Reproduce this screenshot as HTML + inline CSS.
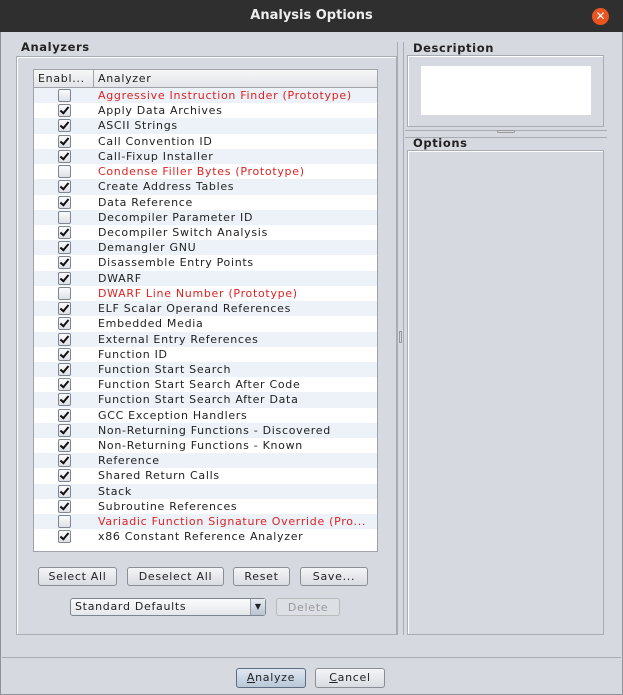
<!DOCTYPE html><html><head><style>
body{margin:0;width:623px;height:695px;overflow:hidden;background:#d6d9df;font-family:"DejaVu Sans","Liberation Sans",sans-serif;font-size:11px;color:#222;position:relative;letter-spacing:0.7px}
.a{position:absolute;box-sizing:border-box}
.title{left:0;top:0;width:623px;height:32px;background:#2f2f2f;color:#eee;font-weight:bold;font-size:13px;text-align:center;line-height:32px;letter-spacing:0}
.close{left:592px;top:8px;width:17px;height:17px;border-radius:50%;background:#e95420;color:#fff;font-size:12px;line-height:17px;text-align:center;font-weight:bold;letter-spacing:0}
.lbl{font-weight:bold;font-size:11.5px;letter-spacing:0.6px}
.box{border:1px solid #a9adb3;box-shadow:inset 1px 1px 0 #fff}
.btn{border:1px solid #8a8e95;border-radius:3px;background:linear-gradient(#f4f5f7,#d9dce1);text-align:center;line-height:17px;font-size:11px}
.row{height:15.23px;line-height:15px;position:relative;white-space:nowrap;overflow:hidden}
.row:nth-child(odd){background:#edf1f8}
.row:nth-child(even){background:#fff}
.cb{position:absolute;left:24px;top:1px;width:11px;height:11px;border:1px solid #7d8590;border-radius:2px;background:linear-gradient(#fafbfc,#dde1e6)}
.cb.c::after{content:"";position:absolute;left:3px;top:0px;width:3px;height:7px;border:solid #111;border-width:0 2px 2px 0;transform:rotate(40deg)}
.t{position:absolute;left:64px}
.r{color:#d22}
</style></head><body>
<div class="a title">Analysis Options</div>
<div class="a close">✕</div>
<div class="a" style="left:0;top:32px;width:623px;height:663px;border:1px solid #8f9298;border-top:none"></div>
<div class="a lbl" style="left:21px;top:40px">Analyzers</div>
<div class="a box" style="left:16px;top:56px;width:381px;height:579px"></div>
<div class="a" style="left:33px;top:69px;width:345px;height:483px;border:1px solid #a0a4aa;background:#fff">
<div style="height:17px;background:linear-gradient(#f6f7f8,#e2e4e8);border-bottom:1px solid #a0a4aa;line-height:17px;position:relative"><span style="position:absolute;left:4px">Enabl...</span><span style="position:absolute;left:59px;top:0;height:17px;border-left:1px solid #a0a4aa;padding-left:4px">Analyzer</span></div>
<div>
<div class="row"><span class="cb"></span><span class="t r">Aggressive Instruction Finder (Prototype)</span></div>
<div class="row"><span class="cb c"></span><span class="t">Apply Data Archives</span></div>
<div class="row"><span class="cb c"></span><span class="t">ASCII Strings</span></div>
<div class="row"><span class="cb c"></span><span class="t">Call Convention ID</span></div>
<div class="row"><span class="cb c"></span><span class="t">Call-Fixup Installer</span></div>
<div class="row"><span class="cb"></span><span class="t r">Condense Filler Bytes (Prototype)</span></div>
<div class="row"><span class="cb c"></span><span class="t">Create Address Tables</span></div>
<div class="row"><span class="cb c"></span><span class="t">Data Reference</span></div>
<div class="row"><span class="cb"></span><span class="t">Decompiler Parameter ID</span></div>
<div class="row"><span class="cb c"></span><span class="t">Decompiler Switch Analysis</span></div>
<div class="row"><span class="cb c"></span><span class="t">Demangler GNU</span></div>
<div class="row"><span class="cb c"></span><span class="t">Disassemble Entry Points</span></div>
<div class="row"><span class="cb c"></span><span class="t">DWARF</span></div>
<div class="row"><span class="cb"></span><span class="t r">DWARF Line Number (Prototype)</span></div>
<div class="row"><span class="cb c"></span><span class="t">ELF Scalar Operand References</span></div>
<div class="row"><span class="cb c"></span><span class="t">Embedded Media</span></div>
<div class="row"><span class="cb c"></span><span class="t">External Entry References</span></div>
<div class="row"><span class="cb c"></span><span class="t">Function ID</span></div>
<div class="row"><span class="cb c"></span><span class="t">Function Start Search</span></div>
<div class="row"><span class="cb c"></span><span class="t">Function Start Search After Code</span></div>
<div class="row"><span class="cb c"></span><span class="t">Function Start Search After Data</span></div>
<div class="row"><span class="cb c"></span><span class="t">GCC Exception Handlers</span></div>
<div class="row"><span class="cb c"></span><span class="t">Non-Returning Functions - Discovered</span></div>
<div class="row"><span class="cb c"></span><span class="t">Non-Returning Functions - Known</span></div>
<div class="row"><span class="cb c"></span><span class="t">Reference</span></div>
<div class="row"><span class="cb c"></span><span class="t">Shared Return Calls</span></div>
<div class="row"><span class="cb c"></span><span class="t">Stack</span></div>
<div class="row"><span class="cb c"></span><span class="t">Subroutine References</span></div>
<div class="row"><span class="cb"></span><span class="t r">Variadic Function Signature Override (Pro...</span></div>
<div class="row"><span class="cb c"></span><span class="t">x86 Constant Reference Analyzer</span></div>
</div></div>
<div class="a btn" style="left:38px;top:567px;width:79px;height:19px">Select All</div>
<div class="a btn" style="left:127px;top:567px;width:97px;height:19px">Deselect All</div>
<div class="a btn" style="left:233px;top:567px;width:57px;height:19px">Reset</div>
<div class="a btn" style="left:300px;top:567px;width:68px;height:19px">Save...</div>
<div class="a" style="left:70px;top:598px;width:196px;height:18px;border:1px solid #7d8590;border-radius:3px;background:linear-gradient(#fafbfc,#e4e7eb);line-height:16px;padding-left:4px">Standard Defaults<span class="a" style="right:0;top:0;width:15px;height:16px;border-left:1px solid #9aa0a8;background:linear-gradient(#e8ecf2,#b9c3d0);font-size:8px;text-align:center;letter-spacing:0">▼</span></div>
<div class="a btn" style="left:276px;top:598px;width:64px;height:18px;color:#999;border-color:#bbb;background:#dcdfe3">Delete</div>
<div class="a" style="left:397px;top:42px;width:1px;height:593px;background:#a9adb3"></div>
<div class="a" style="left:403px;top:42px;width:1px;height:593px;background:#a9adb3"></div>
<div class="a" style="left:399px;top:331px;width:3px;height:12px;border:1px solid #999"></div>
<div class="a lbl" style="left:413px;top:41px">Description</div>
<div class="a box" style="left:407px;top:55px;width:197px;height:72px"></div>
<div class="a" style="left:421px;top:66px;width:170px;height:49px;background:#fff"></div>
<div class="a" style="left:405px;top:130px;width:202px;height:1px;background:#a9adb3"></div>
<div class="a" style="left:405px;top:137px;width:202px;height:1px;background:#a9adb3"></div>
<div class="a" style="left:497px;top:130px;width:18px;height:3px;border:1px solid #999;border-radius:2px"></div>
<div class="a lbl" style="left:413px;top:136px">Options</div>
<div class="a box" style="left:407px;top:150px;width:197px;height:485px"></div>
<div class="a" style="left:2px;top:657px;width:619px;height:1px;background:#a9adb3"></div>
<div class="a btn" style="left:236px;top:668px;width:70px;height:20px;line-height:18px;background:linear-gradient(#dfe7f1,#b9c7d8);border-color:#5d6c80"><u>A</u>nalyze</div>
<div class="a btn" style="left:315px;top:668px;width:70px;height:20px;line-height:18px"><u>C</u>ancel</div>
</body></html>
